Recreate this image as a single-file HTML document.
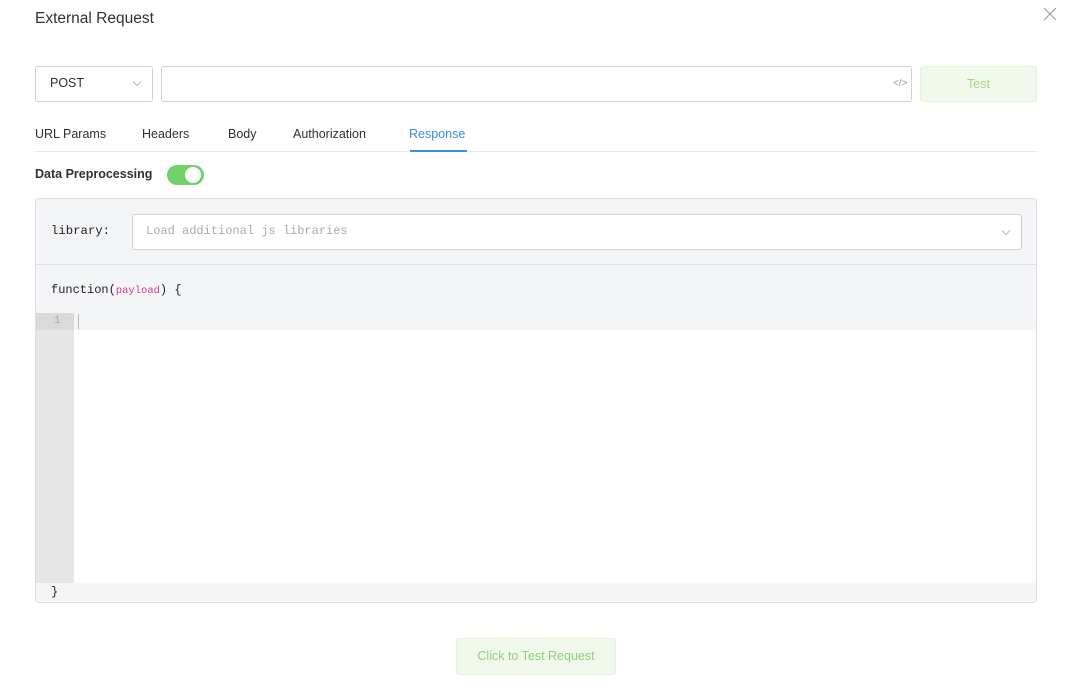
<!DOCTYPE html>
<html><head><meta charset="utf-8"><style>
*{box-sizing:border-box;margin:0;padding:0}
body{width:1069px;height:688px;background:#fff;position:relative;font-family:"Liberation Sans",sans-serif;color:#333;overflow:hidden}
.a{position:absolute}
.mono{font-family:"Liberation Mono","DejaVu Sans Mono",monospace}
</style></head><body>
<div class="a" style="left:35px;top:10px;font-size:15.5px;color:#303133">External Request</div>
<svg class="a" style="left:1043px;top:7px" width="14" height="14" viewBox="0 0 14 14"><path d="M1 1L13 13M13 1L1 13" stroke="#999" stroke-width="1.1"/></svg>

<div class="a" style="left:35px;top:66px;width:118px;height:36px;border:1px solid #cfd2d8;border-radius:3px"></div>
<div class="a" style="left:50px;top:76px;font-size:12.5px;color:#303133">POST</div>
<svg class="a" style="left:132px;top:80px" width="10" height="7" viewBox="0 0 10 7"><path d="M1 1.5L5 5.5L9 1.5" fill="none" stroke="#bbb" stroke-width="1"/></svg>

<div class="a" style="left:161px;top:66px;width:751px;height:36px;border:1px solid #cfd2d8;border-radius:3px"></div>
<div class="a" style="left:893px;top:78px;font-size:10px;color:#999">&lt;/&gt;</div>

<div class="a" style="left:920px;top:66px;width:117px;height:36px;background:#f0f9eb;border:1px solid #e1f3d8;border-radius:3px;text-align:center;line-height:34px;font-size:12.5px;color:#a3d88c">Test</div>

<div class="a" style="left:35px;top:127px;font-size:12.5px;color:#303133">URL Params</div>
<div class="a" style="left:142px;top:127px;font-size:12.5px;color:#303133">Headers</div>
<div class="a" style="left:228px;top:127px;font-size:12.5px;color:#303133">Body</div>
<div class="a" style="left:293px;top:127px;font-size:12.5px;color:#303133">Authorization</div>
<div class="a" style="left:409px;top:127px;font-size:12.5px;color:#3a8ee6">Response</div>
<div class="a" style="left:35px;top:151px;width:1002px;height:1px;background:#e4e7ed"></div>
<div class="a" style="left:410px;top:150px;width:57px;height:2px;background:#3a8ee6"></div>

<div class="a" style="left:35px;top:167px;font-size:12.5px;font-weight:bold;color:#303133">Data Preprocessing</div>
<div class="a" style="left:167px;top:165px;width:37px;height:20px;border-radius:10px;background:#6fd36a"></div>
<div class="a" style="left:185px;top:167px;width:16px;height:16px;border-radius:8px;background:#fff"></div>

<div class="a" style="left:35px;top:198px;width:1002px;height:405px;background:#f4f5f7;border:1px solid #dcdfe6;border-radius:4px;overflow:hidden">
  <div class="a mono" style="left:15px;top:25px;font-size:12.3px;color:#222">library:</div>
  <div class="a" style="left:96px;top:15px;width:890px;height:36px;background:#fff;border:1px solid #cfd2d8;border-radius:3px"></div>
  <div class="a mono" style="left:110px;top:25px;font-size:12px;color:#a8abb2">Load additional js libraries</div>
  <svg class="a" style="left:965px;top:30px" width="10" height="7" viewBox="0 0 10 7"><path d="M1 1.5L5 5.5L9 1.5" fill="none" stroke="#bbb" stroke-width="1"/></svg>
  <div class="a" style="left:0;top:65px;width:1002px;height:1px;background:#dcdfe6"></div>
  <div class="a mono" style="left:15px;top:84px;font-size:12px;color:#222">function(<span style="color:#d9368b;font-size:10.5px">payload</span>) {</div>
  <div class="a" style="left:38px;top:131px;width:964px;height:253px;background:#fff"></div>
  <div class="a" style="left:0;top:114px;width:38px;height:270px;background:#e6e6e6"></div>
  <div class="a" style="left:0;top:114px;width:38px;height:17px;background:#dadada"></div>
  <div class="a mono" style="left:18px;top:116px;font-size:11px;color:#aaa">1</div>
  <div class="a" style="left:42px;top:115px;width:1px;height:15px;background:#bbb"></div>
  <div class="a mono" style="left:15px;top:386px;font-size:12px;color:#222">}</div>
</div>

<div class="a" style="left:456px;top:638px;width:160px;height:37px;background:#f0f9eb;border:1px solid #e1f3d8;border-radius:3px;text-align:center;line-height:35px;font-size:12.5px;color:#8fd07a">Click to Test Request</div>
</body></html>
